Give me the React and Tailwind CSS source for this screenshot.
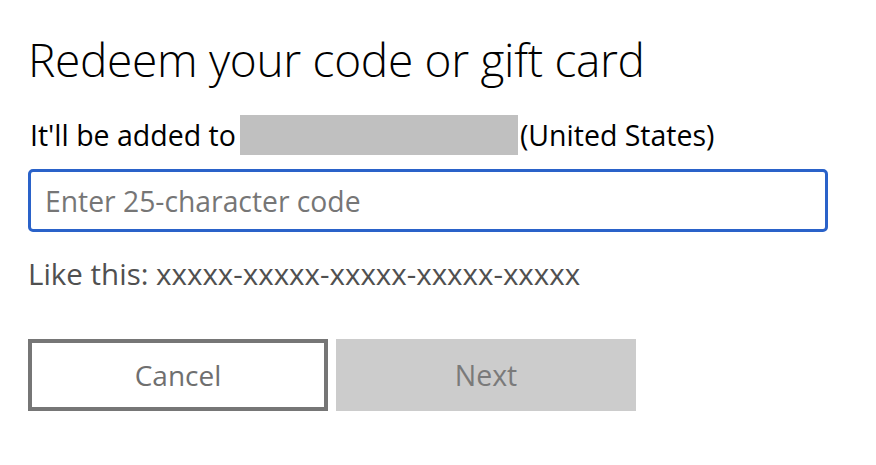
import React, { useState } from 'react';

function RedeemDialog() {
  const [code, setCode] = useState('');

  return (
    <div className="pl-[28px] pt-[31px] font-['Open_Sans',sans-serif]">
      <h1 className="text-[46px] font-light leading-[56px] text-black tracking-[-0.3px]">
        Redeem your code or gift card
      </h1>
      <div className="mt-[28px] flex items-center h-[40px] text-[28.5px] leading-[40px] text-black">
        <span className="pl-[2px] pr-[4px]">It'll be added to</span>
        <span className="inline-block w-[278px] h-[40px] bg-[#c0c0c0]"></span>
        <span className="pl-[2px]">(United States)</span>
      </div>
      <input
        type="text"
        value={code}
        onChange={e => setCode(e.target.value)}
        placeholder="Enter 25-character code"
        className="mt-[14px] block w-[800px] h-[63px] border-[3px] border-[#2a62c9] rounded-[5px] px-[14px] text-[28.3px] text-black placeholder:text-[#767676] outline-none"
      />
      <p className="mt-[25px] text-[29.5px] leading-[34px] text-[#505050]">
        Like this: xxxxx-xxxxx-xxxxx-xxxxx-xxxxx
      </p>
      <div className="mt-[48px] flex gap-[8px]">
        <button className="w-[300px] h-[72px] border-[4px] border-[#767676] bg-white text-[28px] text-[#6f6f6f]">
          Cancel
        </button>
        <button disabled className="w-[300px] h-[72px] bg-[#cccccc] text-[28.5px] text-[#7a7a7a]">
          Next
        </button>
      </div>
    </div>
  );
}

export default function App() {
  return (
    <div className="w-[876px] h-[465px] bg-white overflow-hidden">
      <RedeemDialog />
    </div>
  );
}
